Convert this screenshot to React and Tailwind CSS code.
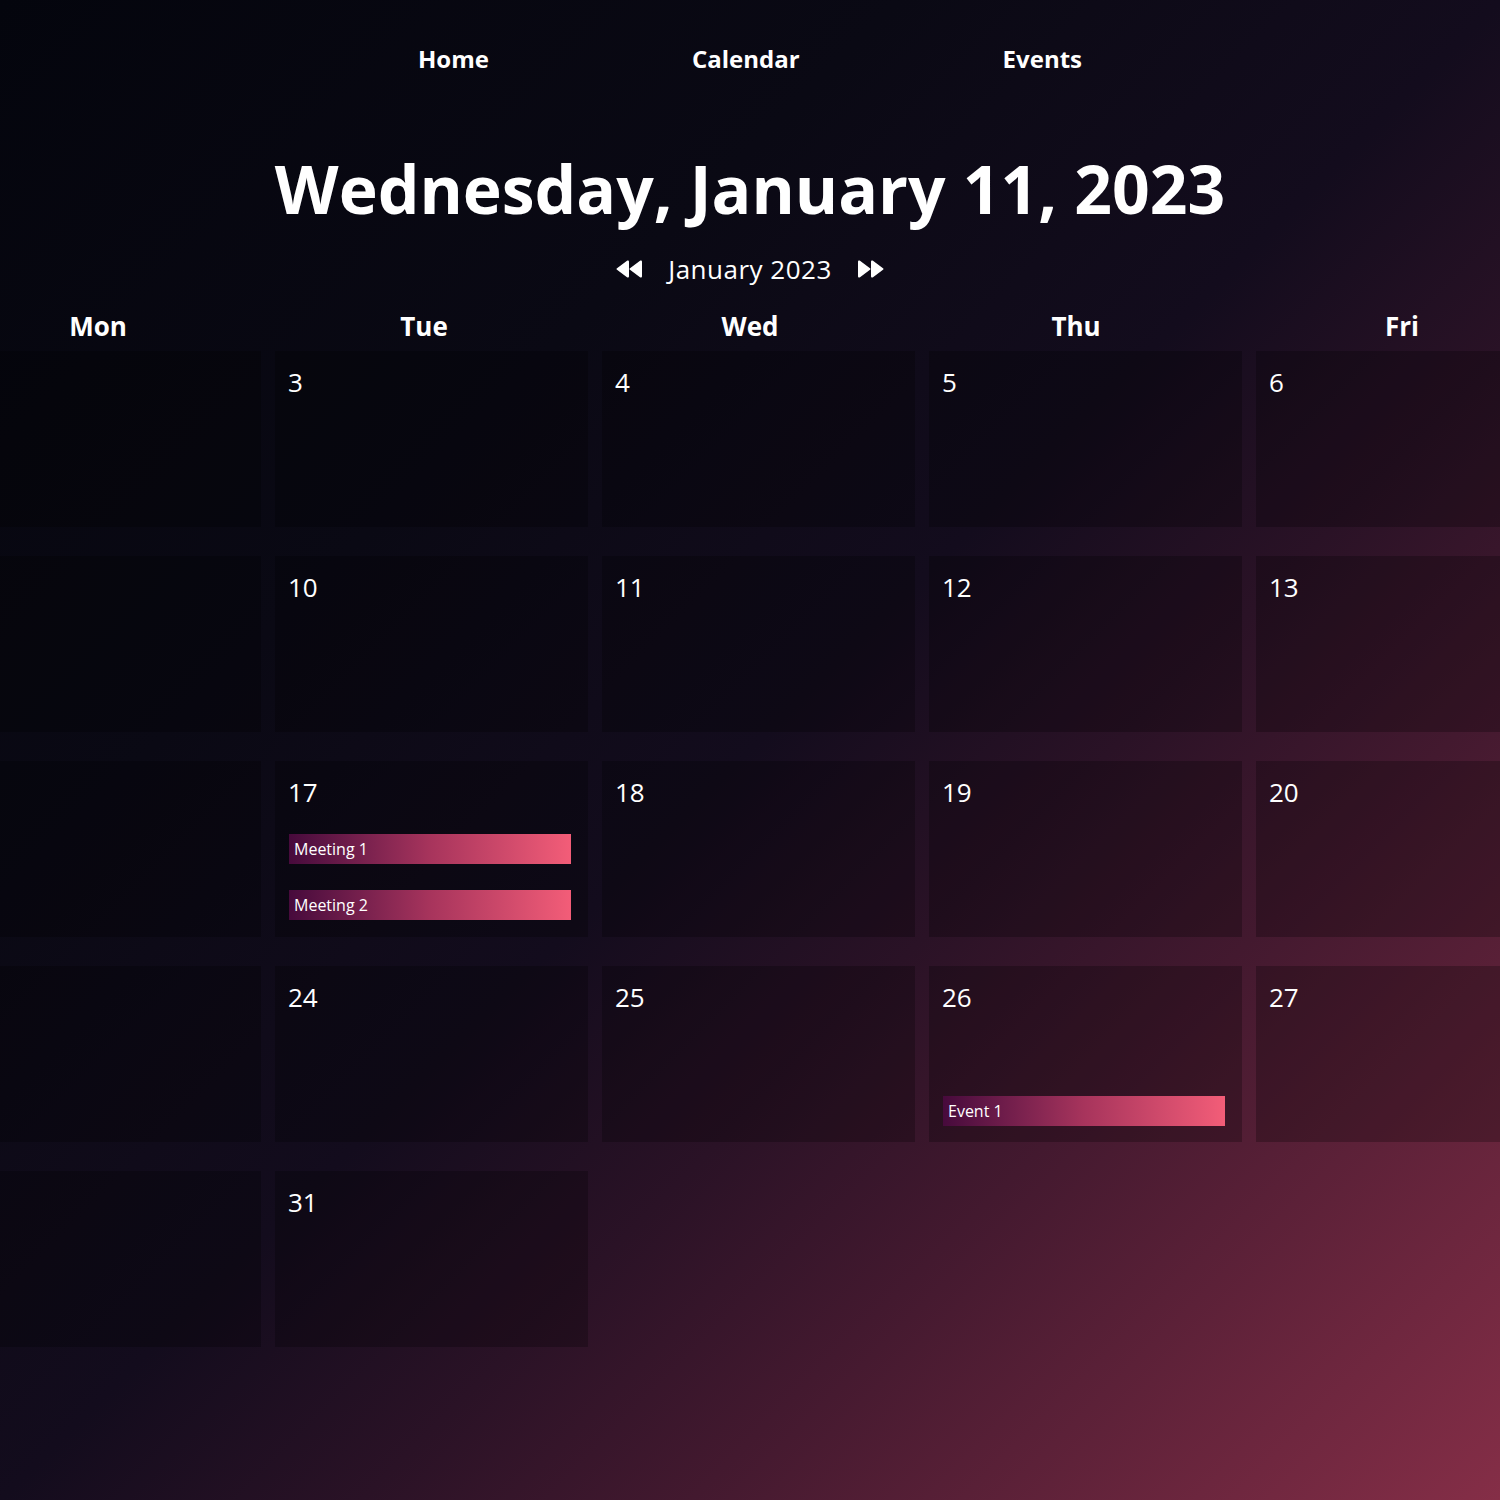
import React from "react";

const days = ["Mon", "Tue", "Wed", "Thu", "Fri"];

// Mon column sits partly off screen, its dates are not visible
const weeks = [
  [null, 3, 4, 5, 6],
  [null, 10, 11, 12, 13],
  [null, 17, 18, 19, 20],
  [null, 24, 25, 26, 27],
  [null, 31],
];

const events = {
  17: { items: ["Meeting 1", "Meeting 2"], bottom: false },
  26: { items: ["Event 1"], bottom: true },
};

function Backward({ flip }) {
  return (
    <svg
      width="27"
      height="18"
      viewBox="0 0 27 18"
      className={flip ? "-scale-x-100" : ""}
      fill="white"
    >
      <path d="M1 9.8 L11 17.2 C12 17.9 13 17.4 13 16.2 V1.8 C13 0.6 12 0.1 11 0.8 L1 8.2 C0.4 8.6 0.4 9.4 1 9.8 Z" />
      <path d="M14 9.8 L24 17.2 C25 17.9 26 17.4 26 16.2 V1.8 C26 0.6 25 0.1 24 0.8 L14 8.2 C13.4 8.6 13.4 9.4 14 9.8 Z" />
    </svg>
  );
}

function EventBar({ label }) {
  return (
    <div className="h-[30px] w-[282px] flex items-center pl-[5px] bg-gradient-to-r from-[#470a3c] via-[#a7345c] to-[#f35d78] text-[16px] font-medium text-white">
      {label}
    </div>
  );
}

function DayCell({ day }) {
  const ev = day ? events[day] : null;
  return (
    <div className="h-[176px] bg-black/25 flex flex-col px-[13px] pt-[18px] pb-[16px]">
      {day && <div className="text-[26px] leading-[26px] text-white">{day}</div>}
      {ev && (
        <div
          className={
            ev.bottom
              ? "mt-auto pl-[1px] flex flex-col gap-[26px]"
              : "mt-[29px] pl-[1px] flex flex-col gap-[26px]"
          }
        >
          {ev.items.map((e) => (
            <EventBar key={e} label={e} />
          ))}
        </div>
      )}
    </div>
  );
}

export default function App() {
  return (
    <div className="min-h-screen w-full overflow-hidden bg-[linear-gradient(135deg,#04050d_0%,#0a0914_30%,#130c1d_50%,#2a1226_62%,#43192f_73%,#852e47_100%)] text-white font-['Open_Sans',sans-serif] pb-[155px]">
      {/* top nav */}
      <nav className="flex justify-center gap-[203px] pt-[41px] text-[24px] leading-[36px] font-bold">
        <a>Home</a>
        <a>Calendar</a>
        <a>Events</a>
      </nav>

      <h1 className="mt-[71px] text-center text-[66px] leading-[80px] font-bold">
        Wednesday, January 11, 2023
      </h1>

      {/* month switcher */}
      <div className="mt-[23px] flex items-center justify-center gap-[25px]">
        <Backward />
        <span className="text-[26px] leading-[36px] tracking-[0.5px]">January 2023</span>
        <Backward flip />
      </div>

      {/* calendar */}
      <div className="mt-[23px] flex justify-center">
        <div className="w-[1618px] shrink-0 grid grid-cols-5 gap-x-[12px] mb-[9px]">
          {days.map((d) => (
            <div key={d} className="text-center text-[26px] font-bold leading-[32px]">
              {d}
            </div>
          ))}
        </div>
      </div>
      <div className="flex justify-center">
        <div className="w-[1621px] shrink-0 ml-[17px] grid grid-cols-5 gap-x-[14px] gap-y-[29px]">
          {weeks.flat().map((d, i) => (
            <DayCell key={i} day={d} />
          ))}
        </div>
      </div>
    </div>
  );
}
